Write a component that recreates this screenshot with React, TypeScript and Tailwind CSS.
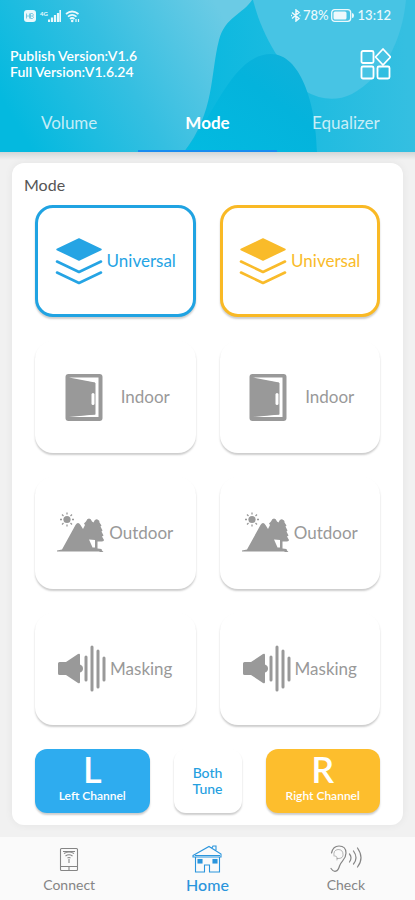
import React, { useState } from "react";

type Tone = "blue" | "amber" | "gray";

const TEXT: Record<Tone, string> = {
  blue: "text-[#25a4e4]",
  amber: "text-[#f9bb2a]",
  gray: "text-[#999999]",
};

const BORDER: Record<Tone, string> = {
  blue: "border-[#20a3e2] shadow-[0_2px_2px_rgba(0,0,0,0.2)]",
  amber: "border-[#f9b925] shadow-[0_2px_2px_rgba(0,0,0,0.2)]",
  gray: "border-transparent shadow-[0_2px_2px_rgba(0,0,0,0.2)]",
};

function LayersIcon() {
  return (
    <svg className="h-12 w-12 shrink-0" viewBox="0 0 48 48" fill="none" stroke="currentColor" strokeWidth="2.6" strokeLinecap="round" strokeLinejoin="round" aria-hidden="true">
      <path d="M24 2 46 12.500 24 23 2 12.500Z" fill="currentColor" strokeWidth="1.500" />
      <path d="m2 24.500 22 10.500 22-10.500M2 35.500 24 46l22-10.500" />
    </svg>
  );
}

function DoorIcon() {
  return (
    <svg className="h-12 w-12 shrink-0" viewBox="0 0 48 48" aria-hidden="true">
      <rect x="4.500" y="1" width="37" height="47" rx="3" fill="currentColor" />
      <path d="M8 4.500H37.500V44H8L34 41.500V9.500Z" fill="white" />
      <path d="M8 5.500 34.500 10v31.500L8 43Z" fill="currentColor" />
      <rect x="30.500" y="20" width="3" height="12" rx="1.500" fill="white" />
    </svg>
  );
}

function OutdoorIcon() {
  return (
    <svg className="h-12 w-12 shrink-0" viewBox="0 0 48 48" fill="currentColor" aria-hidden="true">
      <circle cx="10" cy="10.500" r="3.600" />
      <path d="M10 3.500v2m0 10v2M3 10.500h2m10 0h2M5 5.500l1.500 1.500m7 7 1.500 1.500m0-10-1.500 1.500m-7 7L5 15.500" stroke="currentColor" strokeWidth="1.300" />
      <path d="M0 41.500 5 40.500 18.500 16q2.500-4 5 0l2.500 4 2-4-1-1.500 2-2q1-3 3-3t3 3l1.500 1q1.500-4 4-3t2 3l2 3-1 1 2 4-1 1 2 4-1.500 1 2 3.500q0 1-2 1.500H40.500v7l4 .500.500 1.500 1.500 1.500H43L42 42.500H0Z" />
      <path d="m32 30.500 6 .500v7.500h-2.500Z" fill="white" />
    </svg>
  );
}

function MaskingIcon() {
  return (
    <svg className="h-12 w-12 shrink-0" viewBox="0 0 48 48" fill="currentColor" aria-hidden="true">
      <path d="M1.500 17H8L20 9q2-1 2 1v9.500q3 1 3 4t-3 4V37q0 2-2 1L8 30H1.500Q0 30 0 28.500v-10Q0 17 1.500 17Z" />
      <path d="M28 12v23M34 2v43M40 6v36M46 13v22" stroke="currentColor" strokeWidth="3" strokeLinecap="round" />
    </svg>
  );
}

const MODES = [
  { name: "Universal", icon: LayersIcon, gap: "gap-1" },
  { name: "Indoor", icon: DoorIcon, gap: "gap-3" },
  { name: "Outdoor", icon: OutdoorIcon, gap: "gap-1" },
  { name: "Masking", icon: MaskingIcon, gap: "gap-1" },
];

function StatusBar() {
  return (
    <div className="flex h-8 items-center justify-between px-6 text-xs font-medium text-white/90">
      <div className="flex items-center gap-1">
        <svg className="h-3 w-3" viewBox="0 0 12 12" aria-hidden="true">
          <rect width="12" height="12" rx="3" fill="currentColor" />
          <path d="M2.500 3.500v5m3-5v5m-3-2.500h3m1-2.500v5h2l1-1-1-1.500 1-1-1-1.500h-2m0 2.500h2" fill="none" stroke="#62bfdc" strokeWidth="0.800" />
        </svg>
        <span className="flex items-end">
          <span className="mb-1 text-[6px] leading-[8px] font-bold">4G</span>
          <svg className="h-3 w-[13px]" viewBox="0 0 13 12" fill="none" stroke="currentColor" strokeWidth="2.200" aria-hidden="true">
            <path d="M1 12V9.500M4 12V7.500M7 12V5M10 12V3M12.500 12V0" />
          </svg>
        </span>
        <svg className="h-[13px] w-[15px]" viewBox="0 0 15 13" fill="none" stroke="currentColor" strokeWidth="1.700" aria-hidden="true">
          <path d="M1 4q6-5 12.500 0M3 6.700q4-3.500 8.500 0M5 9q2-2 4.500 0" />
          <circle cx="7.200" cy="11" r="1.300" fill="currentColor" stroke="none" />
          <path d="M11 9v3m2.500-3v3" strokeWidth="1.200" />
        </svg>
      </div>
      <div className="flex items-center">
        <svg className="h-[13px] w-[10px]" viewBox="0 0 10 13" fill="none" stroke="currentColor" strokeWidth="1.500" aria-hidden="true">
          <path d="m1 3.500 7 6-3 2.500V1l3 2.500-7 6M0 6.500h1m7.500 0h1" />
        </svg>
        <span className="ml-[2px] text-[13px]">78%</span>
        <svg className="ml-[2px] h-[13px] w-[23px]" viewBox="0 0 23 13" aria-hidden="true">
          <rect x="0.700" y="0.700" width="19" height="11.600" rx="3" fill="none" stroke="currentColor" strokeWidth="1.300" />
          <rect x="2.500" y="2.500" width="13" height="8" rx="1.500" fill="currentColor" />
          <path d="M21 4q2 0 2 2.500T21 9Z" fill="currentColor" />
        </svg>
        <time className="ml-1 text-[13px]">13:12</time>
      </div>
    </div>
  );
}

function HeaderArt() {
  return (
    <svg className="absolute inset-0 h-full w-full" viewBox="0 0 415 152" preserveAspectRatio="none" aria-hidden="true">
      <defs>
        <linearGradient id="sky" gradientUnits="userSpaceOnUse" x1="20" y1="130" x2="220" y2="10">
          <stop offset="0" stopColor="#04b9df" />
          <stop offset="0.500" stopColor="#35bfe1" />
          <stop offset="1" stopColor="#6bcbe5" />
        </linearGradient>
        <linearGradient id="wave" gradientUnits="userSpaceOnUse" x1="200" y1="100" x2="410" y2="80">
          <stop offset="0" stopColor="#09b8df" />
          <stop offset="1" stopColor="#35bfe1" />
        </linearGradient>
        <linearGradient id="hill" x1="0" y1="1" x2="1" y2="0">
          <stop offset="0" stopColor="#02bbe1" />
          <stop offset="0.600" stopColor="#04b3dc" />
          <stop offset="1" stopColor="#12b0da" />
        </linearGradient>
      </defs>
      <path d="M0 0h415v152H0Z" fill="url(#sky)" />
      <path d="M252 0C243 14 225 17 219 40C210 75 215 112 184 152H415V0Z" fill="url(#wave)" />
      <path d="M253 0C263 39 282 66 305 91Q329 105 352 94C383 77 402 42 406 0Z" fill="#47c4e4" />
      <path d="M184 152C213 119 232 54 271 54C300 54 316 102 317 152Z" fill="url(#hill)" />
    </svg>
  );
}

function Header() {
  const [tab, setTab] = useState("Mode");
  return (
    <header className="relative h-[152px] overflow-hidden bg-[#20bbdf] text-white">
      <HeaderArt />
      <div className="relative flex h-full flex-col">
        <StatusBar />
        <div className="flex h-16 items-center justify-between pl-[10px] pr-6">
          <p className="text-sm leading-4 font-semibold">
            Publish Version:V1.6
            <br />
            Full Version:V1.6.24
          </p>
          <button type="button" aria-label="More functions" className="h-8 w-8">
            <svg className="h-8 w-8" viewBox="0 0 32 32" fill="none" stroke="currentColor" strokeWidth="1.800" strokeLinejoin="round" aria-hidden="true">
              <rect x="2.500" y="3" width="12" height="12" rx="1.500" />
              <rect x="2.500" y="18.500" width="12" height="12" rx="1.500" />
              <rect x="18.500" y="18.500" width="12" height="12" rx="1.500" />
              <path d="m24 1 7.500 8-7.500 8-7.500-8Z" />
            </svg>
          </button>
        </div>
        <nav className="grid flex-1 grid-cols-3 text-[17px]">
          {["Volume", "Mode", "Equalizer"].map((name) => (
            <button
              key={name}
              type="button"
              onClick={() => setTab(name)}
              className={`border-b-2 ${tab === name ? "border-[#188cf0] font-bold" : "border-transparent text-white/75"}`}
            >
              {name}
            </button>
          ))}
        </nav>
      </div>
    </header>
  );
}

function ModeCard({ mode, tone }: { mode: (typeof MODES)[number]; tone: Tone }) {
  const Icon = mode.icon;
  return (
    <button
      type="button"
      className={`flex h-28 items-center justify-center rounded-[18px] border-[3px] bg-white text-[17px] ${mode.gap} ${BORDER[tone]} ${TEXT[tone]}`}
    >
      <Icon />
      <span>{mode.name}</span>
    </button>
  );
}

function ConnectIcon() {
  return (
    <svg className="h-7 w-8" viewBox="0 0 32 28" fill="none" stroke="currentColor" strokeWidth="1.100" aria-hidden="true">
      <rect x="7.500" y="3.500" width="17" height="22" rx="1" />
      <path d="M8 21.500h16M16 22v3M10 6.500h12M11 8.500q5-3 10 0M12.500 11q3.500-2.500 7 0M14.500 13q1.500-1 3 0M16 14v4" />
    </svg>
  );
}

function HomeIcon() {
  return (
    <svg className="h-7 w-8" viewBox="0 0 32 28" fill="none" stroke="currentColor" strokeWidth="1.100" aria-hidden="true">
      <path d="M2 10.500 18 1.500 30 9v3H2ZM4 10.500h25M4.500 12v15h9v-7h5v7h10V12M21 3l1-2h3v5" />
      <rect x="7" y="14.500" width="4" height="3.500" fill="currentColor" />
      <rect x="22" y="14.500" width="4" height="3.500" fill="currentColor" />
    </svg>
  );
}

function EarIcon() {
  return (
    <svg className="h-7 w-8" viewBox="0 0 32 28" fill="none" stroke="currentColor" strokeWidth="1.200" strokeLinecap="round" aria-hidden="true">
      <path d="M1.500 8Q3 1 9 1q7 0 7 7c0 7-5 8-6.500 13C8 27 4 28 1 23.500" />
      <path d="M4 11q-1-6 4-6.500 5 0 5 5c0 4-3 4-6 4M5 11q3 0 2 4" strokeWidth="0.600" />
      <path d="M19.500 9q3 3.500 0 8M23.500 6q5 7 0 13M27.500 3q7 10 0 19" />
    </svg>
  );
}

function BottomNav() {
  const items = [
    { name: "Connect", icon: ConnectIcon, color: "text-[#858585]" },
    { name: "Home", icon: HomeIcon, color: "text-[#2b95dc]" },
    { name: "Check", icon: EarIcon, color: "text-[#858585]" },
  ];
  return (
    <nav className="grid h-16 grid-cols-3 bg-[#fafafa]">
      {items.map(({ name, icon: Icon, color }) => (
        <a key={name} href={`#${name.toLowerCase()}`} className={`flex flex-col items-center pt-2 ${color}`}>
          <Icon />
          <span className={name === "Home" ? "text-base leading-6 font-medium" : "text-sm leading-6"}>{name}</span>
        </a>
      ))}
    </nav>
  );
}

export default function App() {
  return (
    <div className="flex min-h-screen flex-col bg-[#f2f2f2] font-['Lato','Noto_Sans',sans-serif]">
      <Header />
      <main className="flex-1 bg-linear-to-b from-[#d2d6d7] to-[#f1f1f1] to-[8px] px-3 pt-[11px] pb-3">
        <section className="rounded-xl bg-white px-3 pt-[10px] pb-3 shadow-[0_0_8px_rgba(0,0,0,0.06)]">
          <h1 className="text-base leading-6 text-[#555555]">Mode</h1>
          <div className="mt-2 grid grid-cols-2 gap-6 px-[11px]">
            {MODES.map((mode, i) => (
              <React.Fragment key={mode.name}>
                <ModeCard mode={mode} tone={i === 0 ? "blue" : "gray"} />
                <ModeCard mode={mode} tone={i === 0 ? "amber" : "gray"} />
              </React.Fragment>
            ))}
          </div>
          <div className="mt-6 flex gap-6 px-[11px]">
            <button type="button" className="flex h-16 flex-1 flex-col items-center rounded-xl bg-[#2eacef] text-white shadow-[0_2px_2px_rgba(0,0,0,0.2)]">
              <span className="text-[36px] leading-10 font-semibold">L</span>
              <span className="text-xs leading-[14px] font-semibold">Left Channel</span>
            </button>
            <button type="button" className="h-16 w-[68px] rounded-xl bg-white text-sm leading-4 font-medium text-[#25a0df] shadow-[0_2px_2px_rgba(0,0,0,0.2)]">
              Both
              <br />
              Tune
            </button>
            <button type="button" className="flex h-16 flex-1 flex-col items-center rounded-xl bg-[#fdbe2d] text-white shadow-[0_2px_2px_rgba(0,0,0,0.2)]">
              <span className="text-[36px] leading-10 font-semibold">R</span>
              <span className="text-xs leading-[14px] font-semibold">Right Channel</span>
            </button>
          </div>
        </section>
      </main>
      <BottomNav />
    </div>
  );
}
